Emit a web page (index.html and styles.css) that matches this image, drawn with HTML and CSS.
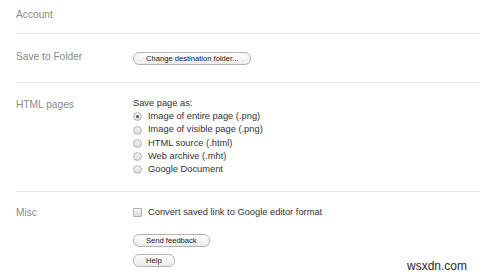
FILE: index.html
```html
<!DOCTYPE html>
<html lang="en">
<head>
    <meta charset="UTF-8">
    <title>Options</title>
    <link rel="stylesheet" href="styles.css">
</head>
<body>

<div class="settings">
    <div class="section account">
        <div class="label">Account</div>
        <div class="value"></div>
    </div>

    <div class="section folder">
        <div class="label">Save to Folder</div>
        <div class="value">
            <button class="button">Change destination folder...</button>
        </div>
    </div>

    <div class="section pages">
        <div class="label">HTML pages</div>
        <div class="value">
            <div class="row">Save page as:</div>
            <label class="row"><span class="radio checked"></span>Image of entire page (.png)</label>
            <label class="row"><span class="radio"></span>Image of visible page (.png)</label>
            <label class="row"><span class="radio"></span>HTML source (.html)</label>
            <label class="row"><span class="radio"></span>Web archive (.mht)</label>
            <label class="row"><span class="radio"></span>Google Document</label>
        </div>
    </div>

    <div class="section misc">
        <div class="label">Misc</div>
        <div class="value">
            <label class="row"><span class="checkbox"></span>Convert saved link to Google editor format</label>
            <button class="button feedback">Send feedback</button>
            <button class="button help">Help</button>
        </div>
    </div>
</div>

<div class="watermark">wsxdn.com</div>

</body>
</html>
```

FILE: styles.css
```css
body {
    margin: 0;
    font-family: 'Liberation Sans', Arial, sans-serif;
    background: #fff;
    color: #333;
    width: 480px;
    height: 277px;
    overflow: hidden;
    position: relative;
}

.settings {
    margin-left: 16px;
}

.section {
    display: grid;
    grid-template-columns: 117px 1fr;
    border-bottom: 1px solid #e6e6e6;
}

.label {
    font-size: 10.2px;
    line-height: 13px;
    color: #8a8a8a;
}

.account {
    padding: 8px 0 12px;
}

.folder {
    padding: 16px 0 17px;
}

.folder .button {
    margin-top: 2px;
}

.pages {
    padding: 14px 0 15px;
}

.pages .label {
    padding-top: 1px;
}

.misc {
    padding: 14px 0 0;
    border-bottom: none;
}

.value {
    display: flex;
    flex-direction: column;
    align-items: flex-start;
}

.row {
    display: flex;
    align-items: center;
    font-size: 9.3px;
    line-height: 13.2px;
    color: #333;
}

.radio {
    width: 7px;
    height: 7px;
    border: 1px solid #b5b5b5;
    border-radius: 50%;
    background: linear-gradient(#f4f4f4, #dcdcdc);
    margin-right: 6px;
    position: relative;
}

.radio.checked::after {
    content: "";
    position: absolute;
    left: 2px;
    top: 2px;
    width: 3px;
    height: 3px;
    border-radius: 50%;
    background: #555;
}

.checkbox {
    width: 7px;
    height: 7px;
    border: 1px solid #b0b0b0;
    border-radius: 1px;
    background: linear-gradient(#f6f6f6, #dadada);
    margin-right: 6px;
}

.button {
    font-family: 'Liberation Sans', Arial, sans-serif;
    font-size: 7.6px;
    line-height: 11px;
    height: 13px;
    padding: 0 12px;
    color: #222;
    background: linear-gradient(#fdfdfd, #ececec);
    border: 1px solid #b4b4b4;
    border-radius: 6px;
    cursor: pointer;
}

.feedback {
    margin-top: 15px;
}

.help {
    margin-top: 7px;
}

.watermark {
    position: absolute;
    left: 407px;
    top: 259px;
    font-size: 12px;
    color: #2a2a2a;
}
```
